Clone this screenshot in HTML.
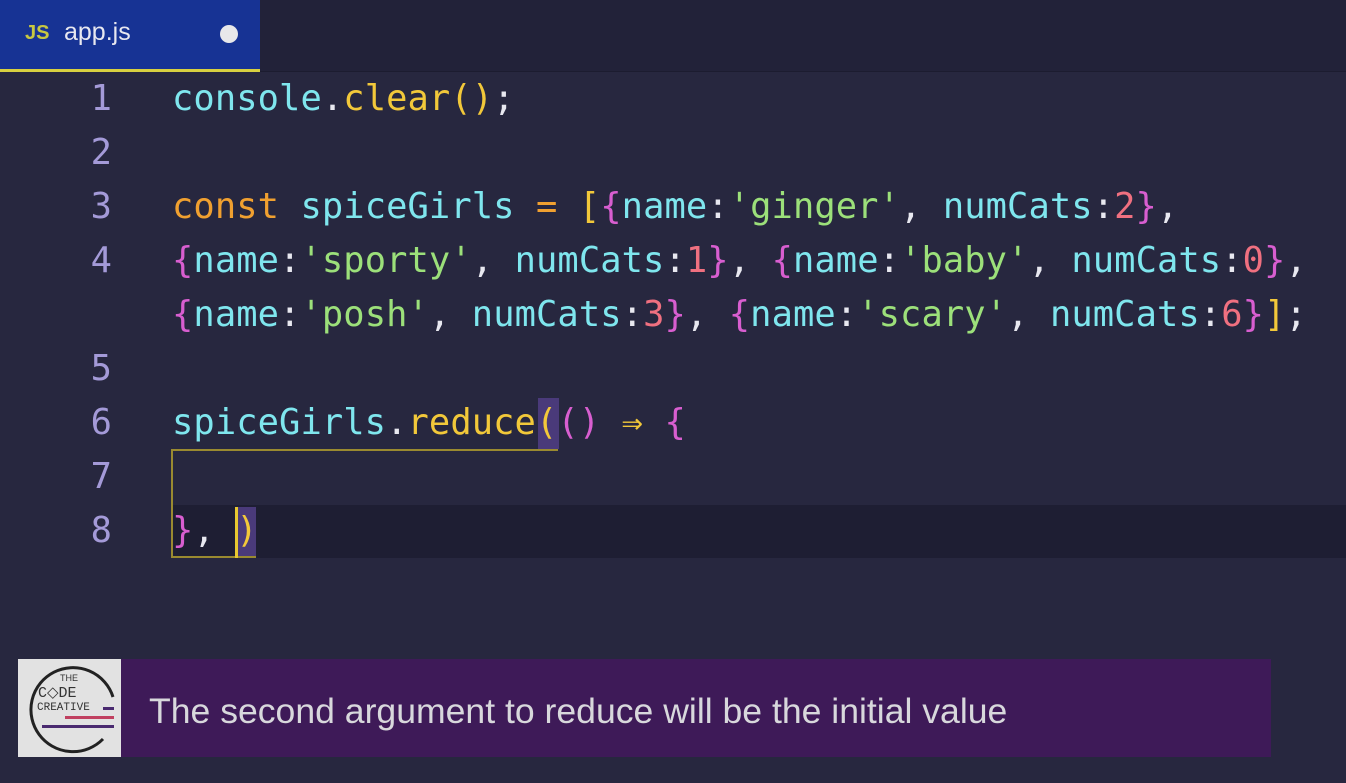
<!DOCTYPE html>
<html><head><style>
body{margin:0;width:1346px;height:783px;background:#27273f;overflow:hidden;position:relative;font-family:"DejaVu Sans Mono","Liberation Mono",monospace}
.tabbar{position:absolute;left:0;top:0;width:1346px;height:71px;background:#222239;border-bottom:1px solid #1c1c30}
.tab{position:absolute;left:0;top:0;width:260px;height:69px;background:#173394;border-bottom:3px solid #d8d040}
.tab .js{position:absolute;left:25px;top:22px;color:#c8c840;font:bold 20px "Liberation Sans",sans-serif}
.tab .nm{position:absolute;left:64px;top:18px;color:#e8e8f0;font:25px "Liberation Sans",sans-serif}
.tab .dot{position:absolute;left:220px;top:25px;width:18px;height:18px;border-radius:50%;background:#e8e8ea}
.l{position:absolute;left:0;height:54px;line-height:54px;font-size:35.4px;letter-spacing:0.1px;white-space:pre;width:1346px}
.n{position:absolute;left:70px;width:42px;text-align:right;color:#a49ad8}
.c{position:absolute;left:172px}
.cy{color:#7fe6ee}.y{color:#f2c83a}.p{color:#d85ed0}.o{color:#f0a030}.g{color:#9ce07a}.w{color:#e8e8f0}.r{color:#f07080}
.hl{position:absolute;left:172px;top:505px;width:1174px;height:53px;background:#1e1e33}
</style></head><body>
<div class="tabbar"><div class="tab"><span class="js">JS</span><span class="nm">app.js</span><span class="dot"></span></div></div>
<div class="hl"></div>
<div style="position:absolute;left:538px;top:398px;width:21px;height:51px;background:#4a3a7a"></div>
<div style="position:absolute;left:237px;top:507px;width:19px;height:51px;background:#4a3a7a"></div>
<div style="position:absolute;left:171px;top:449px;width:387px;height:2px;background:#9a8a30"></div>
<div style="position:absolute;left:171px;top:449px;width:2px;height:109px;background:#9a8a30"></div>
<div style="position:absolute;left:171px;top:556px;width:85px;height:2px;background:#9a8a30"></div>
<div style="position:absolute;left:235px;top:507px;width:3px;height:51px;background:#e8c830"></div>
<div class="l" style="top:72px"><span class="n">1</span><span class="c"><span class="cy">console</span><span class="w">.</span><span class="y">clear</span><span class="y">()</span><span class="w">;</span></span></div>
<div class="l" style="top:126px"><span class="n">2</span></div>
<div class="l" style="top:180px"><span class="n">3</span><span class="c"><span class="o">const</span> <span class="cy">spiceGirls</span> <span class="o">=</span> <span class="y">[</span><span class="p">{</span><span class="cy">name</span><span class="w">:</span><span class="g">'ginger'</span><span class="w">,</span> <span class="cy">numCats</span><span class="w">:</span><span class="r">2</span><span class="p">}</span><span class="w">,</span></span></div>
<div class="l" style="top:234px"><span class="n">4</span><span class="c"><span class="p">{</span><span class="cy">name</span><span class="w">:</span><span class="g">'sporty'</span><span class="w">,</span> <span class="cy">numCats</span><span class="w">:</span><span class="r">1</span><span class="p">}</span><span class="w">,</span> <span class="p">{</span><span class="cy">name</span><span class="w">:</span><span class="g">'baby'</span><span class="w">,</span> <span class="cy">numCats</span><span class="w">:</span><span class="r">0</span><span class="p">}</span><span class="w">,</span></span></div>
<div class="l" style="top:288px"><span class="c"><span class="p">{</span><span class="cy">name</span><span class="w">:</span><span class="g">'posh'</span><span class="w">,</span> <span class="cy">numCats</span><span class="w">:</span><span class="r">3</span><span class="p">}</span><span class="w">,</span> <span class="p">{</span><span class="cy">name</span><span class="w">:</span><span class="g">'scary'</span><span class="w">,</span> <span class="cy">numCats</span><span class="w">:</span><span class="r">6</span><span class="p">}</span><span class="y">]</span><span class="w">;</span></span></div>
<div class="l" style="top:342px"><span class="n">5</span></div>
<div class="l" style="top:396px"><span class="n">6</span><span class="c"><span class="cy">spiceGirls</span><span class="w">.</span><span class="y">reduce(</span><span class="p">()</span> <span class="y">⇒</span> <span class="p">{</span></span></div>
<div class="l" style="top:450px"><span class="n">7</span></div>
<div class="l" style="top:504px"><span class="n">8</span><span class="c"><span class="p">}</span><span class="w">,</span> <span class="y">)</span></span></div>
<div style="position:absolute;left:18px;top:659px;width:103px;height:98px;background:#e2e2e2">
<svg width="103" height="98" viewBox="0 0 103 98"><path d="M95 38 A42 42 0 1 0 85 80" fill="none" stroke="#222" stroke-width="3"/>
<text x="51" y="22" font-family="Liberation Sans" font-size="9" fill="#333" text-anchor="middle">THE</text>
<text x="20" y="38" font-family="Liberation Mono" font-size="15" fill="#333">C◇DE</text>
<text x="19" y="51" font-family="Liberation Mono" font-size="11" fill="#333">CREATIVE</text>
<rect x="85" y="48" width="11" height="3" fill="#4a2a70"/><rect x="47" y="57" width="49" height="3" fill="#c04060"/><rect x="24" y="66" width="72" height="3" fill="#4a2a70"/></svg></div>
<div style="position:absolute;left:121px;top:659px;width:1150px;height:98px;background:#3e1a58"></div>
<div style="position:absolute;left:149px;top:691px;color:#d8d8dc;font:35.6px 'Liberation Sans',sans-serif">The second argument to reduce will be the initial value</div>
</body></html>
